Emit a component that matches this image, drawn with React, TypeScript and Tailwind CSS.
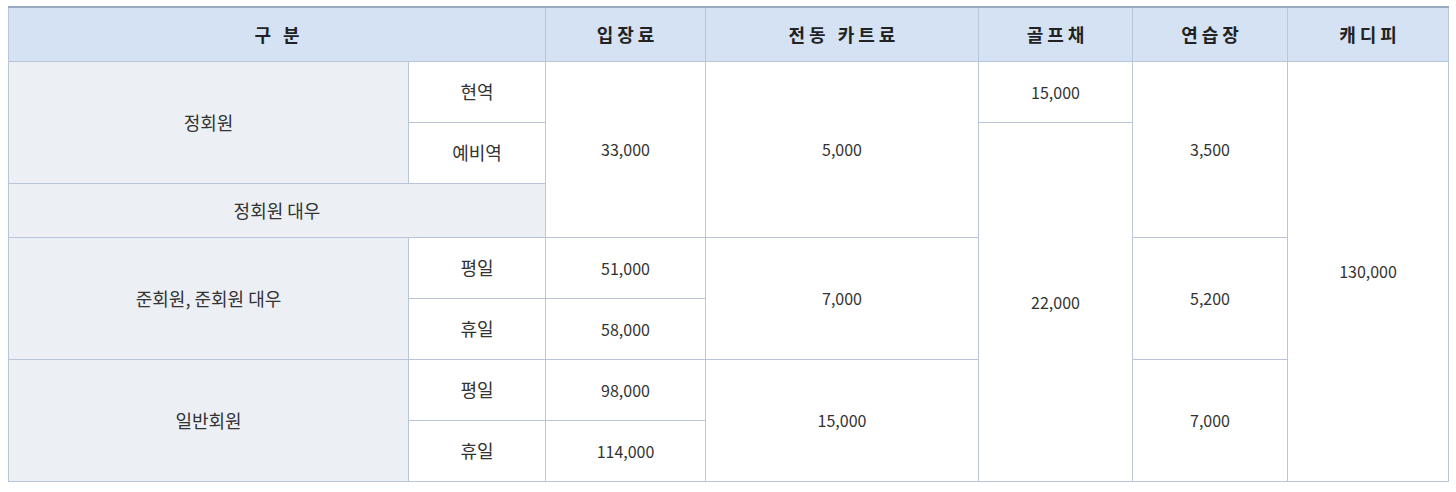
import React from "react";

const td = "border border-[#b9c5d8] text-center align-middle p-0";
const ko = "text-[18px]";
const th = `bg-[#eceff4] ${ko}`;
const hd = "border border-[#b9c5d8] border-t-2 border-t-[#98a9c1] text-center align-middle p-0 pl-[4px] font-bold tracking-[4px]";

export default function App() {
  return (
    <div className="bg-white w-[1456px] h-[492px] pt-[6px] pl-[8px]" style={{ fontFamily: '"Noto Sans CJK KR", "Noto Sans", sans-serif' }}>
      <table className="border-collapse table-fixed w-[1440px] text-[16px] text-[#333] border-t-2 border-t-[#98a9c1]">
        <colgroup>
          <col className="w-[400px]" />
          <col className="w-[137px]" />
          <col className="w-[160px]" />
          <col className="w-[273px]" />
          <col className="w-[154px]" />
          <col className="w-[155px]" />
          <col className="w-[161px]" />
        </colgroup>
        <thead>
          <tr className="h-[54px] bg-[#d5e2f3] text-[#222] text-[18px]">
            <th colSpan={2} className={hd}>구 분</th>
            <th className={hd}>입장료</th>
            <th className={hd}>전동 카트료</th>
            <th className={hd}>골프채</th>
            <th className={hd}>연습장</th>
            <th className={hd}>캐디피</th>
          </tr>
        </thead>
        <tbody>
          <tr className="h-[61px]">
            <td rowSpan={2} className={`${td} ${th}`}>정회원</td>
            <td className={`${td} ${ko}`}>현역</td>
            <td rowSpan={3} className={td}>33,000</td>
            <td rowSpan={3} className={td}>5,000</td>
            <td className={td}>15,000</td>
            <td rowSpan={3} className={td}>3,500</td>
            <td rowSpan={7} className={td}>130,000</td>
          </tr>
          <tr className="h-[61px]">
            <td className={`${td} ${ko}`}>예비역</td>
            <td rowSpan={6} className={td}>22,000</td>
          </tr>
          <tr className="h-[54px]">
            <td colSpan={2} className={`${td} ${th}`}>정회원 대우</td>
          </tr>
          <tr className="h-[61px]">
            <td rowSpan={2} className={`${td} ${th}`}>준회원, 준회원 대우</td>
            <td className={`${td} ${ko}`}>평일</td>
            <td className={td}>51,000</td>
            <td rowSpan={2} className={td}>7,000</td>
            <td rowSpan={2} className={td}>5,200</td>
          </tr>
          <tr className="h-[61px]">
            <td className={`${td} ${ko}`}>휴일</td>
            <td className={td}>58,000</td>
          </tr>
          <tr className="h-[61px]">
            <td rowSpan={2} className={`${td} ${th}`}>일반회원</td>
            <td className={`${td} ${ko}`}>평일</td>
            <td className={td}>98,000</td>
            <td rowSpan={2} className={td}>15,000</td>
            <td rowSpan={2} className={td}>7,000</td>
          </tr>
          <tr className="h-[61px]">
            <td className={`${td} ${ko}`}>휴일</td>
            <td className={td}>114,000</td>
          </tr>
        </tbody>
      </table>
    </div>
  );
}
